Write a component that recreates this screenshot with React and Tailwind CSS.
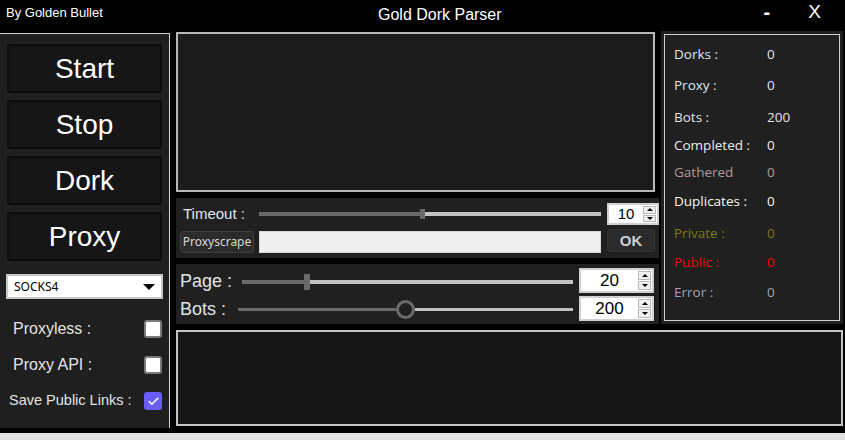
import { Check } from "lucide-react";

const Spin = ({ value, w, h, size }) => (
  <div className={`flex bg-white border-2 border-[#d0d0d0] ${w} ${h}`}>
    <div className={`flex-1 flex items-center justify-center text-black ${size}`}>
      {value}
    </div>
    <div className="w-[14px] flex flex-col gap-px py-px pr-px">
      <div className="flex-1 border border-[#b8b8b8] bg-[#f0f0f0] flex items-center justify-center">
        <div className="w-0 h-0 border-x-[3px] border-x-transparent border-b-[3px] border-b-black" />
      </div>
      <div className="flex-1 border border-[#b8b8b8] bg-[#f0f0f0] flex items-center justify-center">
        <div className="w-0 h-0 border-x-[3px] border-x-transparent border-t-[3px] border-t-black" />
      </div>
    </div>
  </div>
);

const BigButton = ({ label }) => (
  <button className="h-[49px] w-full bg-[#161616] border-2 border-[#0c0c0c] rounded-[3px] text-white text-[28px] leading-none">
    {label}
  </button>
);

const Stat = ({ label, value, color, h }) => (
  <div className={`flex items-center ${h}`} style={{ color }}>
    <span className="w-[93px]">{label}</span>
    <span>{value}</span>
  </div>
);

export default function App() {
  return (
    <div
      className="w-[845px] h-[440px] bg-black flex flex-col overflow-hidden"
      style={{ fontFamily: '"Liberation Sans", Arial, sans-serif' }}
    >
      {/* Title bar */}
      <div className="h-[32px] flex items-start text-white shrink-0">
        <span className="w-[378px] pl-[6px] pt-[3px] text-[13px]">By Golden Bullet</span>
        <span className="pt-[3px] text-[16px]">Gold Dork Parser</span>
        <span className="ml-[262px] pt-[1px] text-[20px] font-bold leading-[22px]">-</span>
        <span className="ml-[38px] pt-[1px] text-[19px] leading-[22px]">X</span>
      </div>

      <div className="flex h-[396px] shrink-0">
        {/* Left panel */}
        <div className="w-[170px] mt-px h-[395px] bg-[#1f1f1f] border-t border-r border-[#cfcfcf] px-[7px] pt-[10px] flex flex-col">
          <div className="flex flex-col gap-[7px]">
            <BigButton label="Start" />
            <BigButton label="Stop" />
            <BigButton label="Dork" />
            <BigButton label="Proxy" />
          </div>
          <div
            className="mt-[13px] -mx-px h-[25px] bg-white border-2 border-[#c8c8c8] flex items-center pl-[6px] pr-[6px] text-[12px] text-black"
            style={{ fontFamily: '"Noto Sans", sans-serif' }}
          >
            <span className="flex-1">SOCKS4</span>
            <div className="w-0 h-0 border-x-[6px] border-x-transparent border-t-[6px] border-t-black" />
          </div>
          <div className="mt-[21px] flex items-center justify-between pl-[6px] text-[#e4e4e4] text-[16px] h-[18px]">
            <span>Proxyless :</span>
            <div className="w-[18px] h-[18px] bg-white border-2 border-[#7a7a7a] rounded-[3px]" />
          </div>
          <div className="mt-[18px] flex items-center justify-between pl-[6px] text-[#e4e4e4] text-[16px] h-[18px]">
            <span>Proxy API :</span>
            <div className="w-[18px] h-[18px] bg-white border-2 border-[#7a7a7a] rounded-[3px]" />
          </div>
          <div className="mt-[18px] flex items-center justify-between pl-[2px] text-[#e4e4e4] text-[14.5px] h-[18px]">
            <span className="whitespace-nowrap">Save Public Links :</span>
            <div className="shrink-0 w-[18px] h-[18px] bg-[#6a5cf6] rounded-[3px] flex items-center justify-center">
              <Check size={13} color="white" strokeWidth={3} />
            </div>
          </div>
        </div>

        {/* Right side */}
        <div className="ml-[6px] flex flex-col">
          <div className="flex">
            {/* Center column */}
            <div className="w-[483px] flex flex-col">
              <div className="w-[479px] h-[160px] bg-[#1b1b1b] border-2 border-[#b8b8b8]" />

              <div className="mt-[6px] h-[60px] bg-[#202020] flex flex-col">
                <div className="h-[32px] flex items-center">
                  <span className="ml-[7px] w-[76px] text-[15px] text-[#e4e4e4]">Timeout :</span>
                  <div className="w-[342px] h-[4px] flex items-center">
                    <div className="w-[161px] h-[4px] bg-[#6a6a6a]" />
                    <div className="w-[5px] h-[10px] bg-[#6a6a6a]" />
                    <div className="flex-1 h-[4px] bg-[#c2c2c2]" />
                  </div>
                  <div className="ml-[6px]">
                    <Spin value="10" w="w-[52px]" h="h-[22px]" size="text-[15px]" />
                  </div>
                </div>
                <div className="h-[24px] flex items-center">
                  <button
                    className="ml-[4px] w-[74px] h-[22px] bg-[#2b2b2b] border border-[#3e3e3e] rounded-[3px] text-[12px] text-[#d8d8d8]"
                    style={{ fontFamily: '"Noto Sans", sans-serif' }}
                  >
                    Proxyscrape
                  </button>
                  <div className="ml-[5px] w-[342px] h-[22px] bg-[#efefef] border border-[#d8d8d8]" />
                  <button className="ml-[6px] -mt-[3px] w-[48px] h-[23px] bg-[#2b2b2b] border border-[#353535] rounded-[3px] text-[15px] font-bold text-[#d0d0d0]">
                    OK
                  </button>
                </div>
              </div>

              <div className="mt-[6px] h-[60px] bg-[#202020] flex">
                <div className="flex-1 flex flex-col">
                  <div className="h-[29px] mt-[3px] flex items-center">
                    <span className="ml-[4px] w-[62px] text-[18px] text-[#e4e4e4]">Page :</span>
                    <div className="w-[331px] flex items-center">
                      <div className="w-[62px] h-[4px] bg-[#6a6a6a]" />
                      <div className="w-[6px] h-[16px] bg-[#6a6a6a]" />
                      <div className="flex-1 h-[4px] bg-[#c2c2c2]" />
                    </div>
                  </div>
                  <div className="h-[26px] flex items-center">
                    <span className="ml-[4px] w-[58px] text-[18px] text-[#e4e4e4]">Bots :</span>
                    <div className="w-[335px] flex items-center">
                      <div className="w-[158px] h-[3px] bg-[#6a6a6a]" />
                      <div className="w-[19px] h-[19px] rounded-full border-[3px] border-[#6a6a6a] bg-[#202020]" />
                      <div className="flex-1 h-[3px] bg-[#c2c2c2]" />
                    </div>
                  </div>
                </div>
                <div className="w-[80px] flex flex-col gap-[3px] pt-[4px]">
                  <Spin value="20" w="w-[75px]" h="h-[25px]" size="text-[17px]" />
                  <Spin value="200" w="w-[75px]" h="h-[25px]" size="text-[17px]" />
                </div>
              </div>
            </div>

            {/* Stats panel */}
            <div className="ml-[2px] -mt-px w-[182px] h-[293px] bg-[#202020] p-[3px]">
              <div
                className="h-full border border-[#cfcfcf] pl-[9px] pt-[8px] text-[13.5px]"
                style={{ fontFamily: '"Open Sans", "Noto Sans", sans-serif' }}
              >
                <Stat label="Dorks :" value="0" color="#dde6f4" h="h-[22px]" />
                <div className="h-[9px]" />
                <Stat label="Proxy :" value="0" color="#dde6f4" h="h-[22px]" />
                <div className="h-[10px]" />
                <Stat label="Bots :" value="200" color="#e6e6e6" h="h-[22px]" />
                <div className="h-[6px]" />
                <Stat label="Completed :" value="0" color="#eaeaf4" h="h-[22px]" />
                <div className="h-[5px]" />
                <Stat label="Gathered" value="0" color="#b39a98" h="h-[22px]" />
                <div className="h-[7px]" />
                <Stat label="Duplicates :" value="0" color="#fbf6ea" h="h-[22px]" />
                <div className="h-[10px]" />
                <Stat label="Private :" value="0" color="#7c7a14" h="h-[22px]" />
                <div className="h-[7px]" />
                <Stat label="Public :" value="0" color="#ea0a0a" h="h-[22px]" />
                <div className="h-[8px]" />
                <Stat label="Error :" value="0" color="#9ea6b2" h="h-[22px]" />
              </div>
            </div>
          </div>

          {/* Log box */}
          <div className="mt-[6px] w-[667px] h-[96px] bg-[#161616] border-2 border-[#c4c4c4]" />
        </div>
      </div>

      <div className="mt-auto h-[7px] bg-[#e2e2e2]" />
    </div>
  );
}
